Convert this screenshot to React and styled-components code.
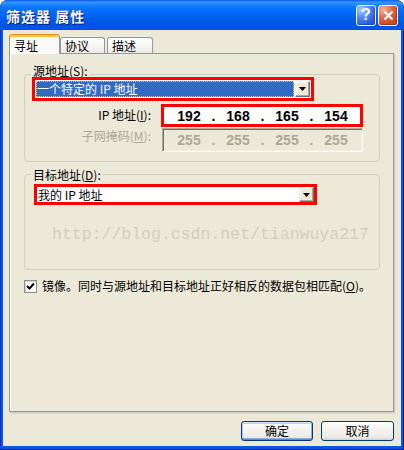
import styled, { createGlobalStyle, css } from "styled-components";

const GlobalStyle = createGlobalStyle`
  html, body {
    margin: 0;
    padding: 0;
    background: #ffffff;
  }
  body {
    font-family: "Noto Sans CJK SC", "Liberation Sans", sans-serif;
    font-size: 12px;
    color: #000000;
  }
  * {
    box-sizing: border-box;
  }
`;

const beige = "#ECE9D8";

const App = () => {
  return (
    <>
      <GlobalStyle />
      <Window>
        <TitleBar>
          <Title>筛选器 属性</Title>
          <CaptionButtons>
            <CaptionButton $variant='help'>?</CaptionButton>
            <CaptionButton $variant='close'>
              <svg width='11' height='11' viewBox='0 0 11 11'>
                <path
                  d='M1.5 1.5 L9.5 9.5 M9.5 1.5 L1.5 9.5'
                  stroke='#ffffff'
                  strokeWidth='2.2'
                  fill='none'
                />
              </svg>
            </CaptionButton>
          </CaptionButtons>
        </TitleBar>

        <Body>
          <TabStrip>
            <Tab $active $width={51}>
              寻址
            </Tab>
            <Tab $width={45}>协议</Tab>
            <Tab $width={46} $gap={2}>
              描述
            </Tab>
          </TabStrip>

          <TabPanel>
            <GroupBox $pb={9}>
              <Legend $up={9} $down={2}>
                源地址(<u>S</u>):
              </Legend>
              <Highlight $w={282} $h={24} $ml={7}>
                <ComboInner $padded>
                  <Selection>一个特定的 IP 地址</Selection>
                  <DropButton>
                    <DropArrow />
                  </DropButton>
                </ComboInner>
              </Highlight>

              <FieldRow $mt={3}>
                <FieldLabel $pt={4}>
                  IP 地址(<u>I</u>):
                </FieldLabel>
                <Highlight $w={202} $h={23}>
                  <IpField $pl={5}>
                    {["192", "168", "165", "154"].map((part, i) => (
                      <IpPart key={i} part={part} first={i === 0} />
                    ))}
                  </IpField>
                </Highlight>
              </FieldRow>

              <FieldRow $mt={1}>
                <FieldLabel $pt={1} $disabled>
                  子网掩码(<u>M</u>):
                </FieldLabel>
                <SubnetField>
                  <IpField $pl={6}>
                    {["255", "255", "255", "255"].map((part, i) => (
                      <IpPart key={i} part={part} first={i === 0} disabled />
                    ))}
                  </IpField>
                </SubnetField>
              </FieldRow>
            </GroupBox>

            <GroupBox $pb={24} $mt={12}>
              <Legend $up={5} $down={-1}>
                目标地址(<u>D</u>):
              </Legend>
              <Highlight $w={283} $h={21} $ml={9} $mt={6}>
                <ComboInner>
                  <ComboText>我的 IP 地址</ComboText>
                  <DropButton>
                    <DropArrow />
                  </DropButton>
                </ComboInner>
              </Highlight>
              <Watermark>http://blog.csdn.net/tianwuya217</Watermark>
            </GroupBox>

            <CheckRow>
              <CheckBox>
                <svg width='11' height='11' viewBox='0 0 11 11'>
                  <polyline
                    points='2,5 4.5,7.5 9,2.5'
                    stroke='#000000'
                    strokeWidth='2'
                    fill='none'
                  />
                </svg>
              </CheckBox>
              <span>
                镜像。同时与源地址和目标地址正好相反的数据包相匹配(<u>O</u>)。
              </span>
            </CheckRow>
          </TabPanel>

          <ButtonRow>
            <DialogButton $w={72} $default>
              确定
            </DialogButton>
            <DialogButton $w={73}>取消</DialogButton>
          </ButtonRow>
        </Body>
      </Window>
    </>
  );
};

const IpPart = ({ part, first, disabled }) => (
  <>
    {!first && <Dot $disabled={disabled}>.</Dot>}
    <Octet $disabled={disabled}>{part}</Octet>
  </>
);

const DropArrow = () => (
  <svg width='7' height='4' viewBox='0 0 7 4'>
    <polygon points='0,0 7,0 3.5,4' fill='#000000' />
  </svg>
);

const Window = styled.div`
  width: 404px;
  height: 450px;
  display: flex;
  flex-direction: column;
  background: #0a55e8;
  border-radius: 8px 8px 0 0;
  overflow: hidden;
  box-shadow: inset 1px 0 0 #0030c8, inset -1px 0 0 #001ea0,
    inset 0 -1px 0 #001ea0;
`;

const TitleBar = styled.div`
  height: 30px;
  flex-shrink: 0;
  display: flex;
  align-items: center;
  justify-content: space-between;
  padding: 0 6px;
  border-radius: 8px 8px 0 0;
  background: linear-gradient(
    to bottom,
    #0058ee 0%,
    #3a93ff 7%,
    #288eff 12%,
    #127dff 20%,
    #036ffc 32%,
    #0262ee 56%,
    #0057e5 72%,
    #0054e3 88%,
    #0055eb 95%,
    #0048d4 100%
  );
`;

const Title = styled.span`
  color: #ffffff;
  font-weight: 700;
  font-size: 14px;
  line-height: 16px;
  letter-spacing: 1px;
  padding-top: 1px;
  text-shadow: 1px 1px 0 #0a1883;
`;

const CaptionButtons = styled.div`
  display: flex;
  gap: 2px;
`;

const CaptionButton = styled.div`
  width: 20px;
  height: 21px;
  border: 1px solid #ffffff;
  border-radius: 3px;
  display: flex;
  align-items: center;
  justify-content: center;
  color: #ffffff;
  font: 700 16px/1 "Liberation Sans", sans-serif;
  box-shadow: inset -1px -1px 0 rgba(0, 0, 0, 0.18);
  background: ${(p) =>
    p.$variant === "close"
      ? "radial-gradient(circle at 25% 20%, #f3b39c 0%, #e4714f 35%, #d24a25 70%, #bd3b18 100%)"
      : "radial-gradient(circle at 25% 20%, #b5cdfd 0%, #5a8ff5 35%, #2c63e0 70%, #1f4fc6 100%)"};
`;

const Body = styled.div`
  flex: 1;
  margin: 0 3px 4px;
  padding: 4px 7px 0 6px;
  background: ${beige};
  display: flex;
  flex-direction: column;
`;

const TabStrip = styled.div`
  height: 19px;
  display: flex;
  align-items: flex-end;
`;

const Tab = styled.div`
  width: ${(p) => p.$width}px;
  height: ${(p) => (p.$active ? 20 : 16)}px;
  margin-left: ${(p) => p.$gap || 0}px;
  margin-bottom: ${(p) => (p.$active ? -1 : 0)}px;
  padding-left: 4px;
  display: flex;
  align-items: center;
  line-height: 14px;
  border: 1px solid #919b9c;
  border-bottom: none;
  border-radius: 3px 3px 0 0;
  background: linear-gradient(to bottom, #ffffff 0%, #f7f6f2 50%, #ecebe5 100%);
  ${(p) =>
    p.$active &&
    css`
      position: relative;
      z-index: 1;
      border-top-color: #e68b2c;
      background: #fbfaf6;
      box-shadow: inset 0 2px 0 #ffc73c;
      padding-top: 2px;
    `}
`;

const TabPanel = styled.div`
  height: 359px;
  padding: 20px 13px 0 14px;
  display: flex;
  flex-direction: column;
  border: 1px solid #919b9c;
  background: ${beige};
  box-shadow: inset 1px 0 0 #ffffff, 1px 1px 0 #d0cdbe, 2px 2px 0 #e0ddce;
`;

const GroupBox = styled.div`
  margin-top: ${(p) => p.$mt || 0}px;
  padding-bottom: ${(p) => p.$pb}px;
  display: flex;
  flex-direction: column;
  align-items: flex-start;
  border: 1px solid #d0d0bf;
  border-radius: 4px;
`;

const Legend = styled.span`
  display: block;
  margin: ${(p) => -p.$up}px 0 ${(p) => p.$down}px 6px;
  padding: 0 2px;
  height: 9px;
  line-height: 9px;
  background: ${beige};
`;

const Highlight = styled.div`
  width: ${(p) => p.$w}px;
  height: ${(p) => p.$h}px;
  margin: ${(p) => p.$mt || 0}px 0 0 ${(p) => p.$ml || 0}px;
  border: 3px solid #ff0000;
  background: #ffffff;
  display: flex;
`;

const ComboInner = styled.div`
  flex: 1;
  display: flex;
  padding: ${(p) => (p.$padded ? "1px" : "0")};
  background: #ffffff;
`;

const Selection = styled.div`
  flex: 1;
  line-height: 14px;
  color: #ffffff;
  background: #316ac5;
  border: 1px dotted #d9c98a;
  white-space: nowrap;
`;

const ComboText = styled.div`
  flex: 1;
  padding-left: 1px;
  line-height: 15px;
  white-space: nowrap;
`;

const DropButton = styled.div`
  width: 15px;
  margin-left: 1px;
  display: flex;
  align-items: center;
  justify-content: center;
  background: ${beige};
  border: 1px solid;
  border-color: #f1efe2 #716f64 #716f64 #f1efe2;
  box-shadow: inset -1px -1px 0 #aca899, inset 1px 1px 0 #ffffff;
`;

const FieldRow = styled.div`
  width: 100%;
  margin-top: ${(p) => p.$mt}px;
  display: flex;
  align-items: flex-start;
  gap: 10px;
`;

const FieldLabel = styled.span`
  width: 126px;
  padding-top: ${(p) => p.$pt}px;
  text-align: right;
  line-height: 14px;
  white-space: nowrap;
  color: ${(p) => (p.$disabled ? "#ACA899" : "#000000")};
`;

const IpField = styled.div`
  flex: 1;
  display: flex;
  align-items: center;
  padding-left: ${(p) => p.$pl}px;
`;

const SubnetField = styled.div`
  width: 201px;
  height: 24px;
  margin-left: 1px;
  display: flex;
  background: ${beige};
  border: 1px solid;
  border-color: #aca899 #ffffff #ffffff #aca899;
  box-shadow: inset 1px 1px 0 #716f64, inset -1px -1px 0 #f1efe2;
`;

const Octet = styled.span`
  width: 40px;
  text-align: center;
  font: 700 14px/1 "Liberation Sans", Arial, sans-serif;
  color: ${(p) => (p.$disabled ? "#ACA899" : "#000000")};
`;

const Dot = styled(Octet)`
  width: 9px;
`;

const Watermark = styled.div`
  margin: 20px 0 0 27px;
  font: 16.5px/20px "Liberation Mono", monospace;
  color: #d2cfc1;
  white-space: nowrap;
`;

const CheckRow = styled.div`
  margin-top: 9px;
  display: flex;
  align-items: center;
  gap: 5px;
  line-height: 14px;
  white-space: nowrap;
`;

const CheckBox = styled.div`
  width: 13px;
  height: 13px;
  display: flex;
  align-items: center;
  justify-content: center;
  background: #ffffff;
  border: 1px solid #8c8c88;
  box-shadow: inset 1px 1px 0 #d8d6cc;
`;

const ButtonRow = styled.div`
  margin-top: 9px;
  display: flex;
  justify-content: flex-end;
  gap: 8px;
`;

const DialogButton = styled.div`
  width: ${(p) => p.$w}px;
  height: 20px;
  display: flex;
  align-items: center;
  justify-content: center;
  line-height: 14px;
  border: 1px solid #003c74;
  border-radius: 3px;
  background: linear-gradient(
    to bottom,
    #ffffff 0%,
    #f4f3ee 40%,
    #ecebe6 85%,
    #d6d0c5 100%
  );
  ${(p) =>
    p.$default &&
    css`
      box-shadow: inset 0 1px 0 #cee7ff, inset 0 -1px 0 #6982ee,
        inset 1px 0 0 #b6ccf5, inset -1px 0 0 #89ade4,
        inset 0 2px 0 #bcd4f6, inset 0 -2px 0 #89ade4;
    `}
`;

export default App;
